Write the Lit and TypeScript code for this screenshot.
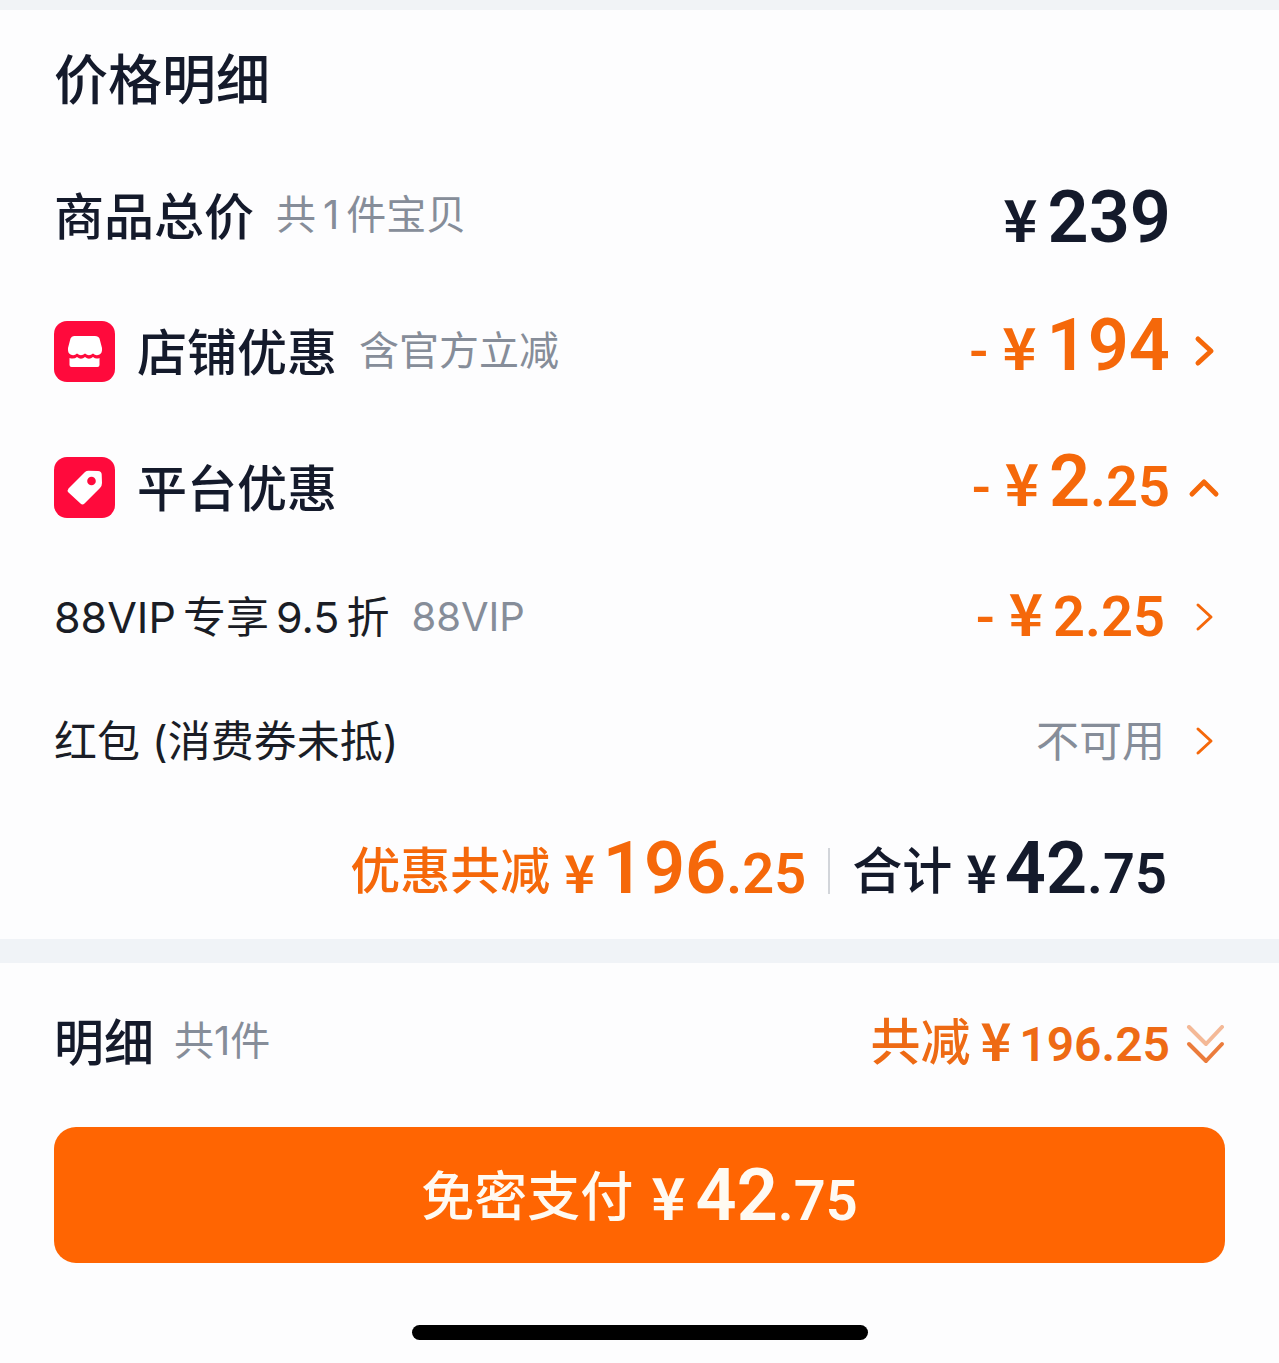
import { LitElement, html, css, svg, nothing } from "lit";
import { customElement, property } from "lit/decorators.js";

@customElement("price-amount")
class PriceAmount extends LitElement {
  @property() whole = "";
  @property() fraction = "";
  @property({ type: Boolean }) minus = false;

  static styles = css`
    :host {
      display: inline-flex;
      align-items: baseline;
      font-family: Roboto, "Noto Sans CJK SC", sans-serif;
      font-weight: 600;
      line-height: 72px;
      white-space: nowrap;
    }
    .minus {
      font-size: 56px;
      font-weight: 500;
      margin-right: 14px;
    }
    .yen {
      font-family: "Noto Sans CJK SC", sans-serif;
      font-weight: 700;
      font-size: 58px;
      margin-right: 10px;
    }
    .whole {
      font-size: 72px;
    }
    .fraction {
      font-size: 56px;
    }
    :host([even]) .whole {
      font-size: 56px;
    }
    :host([summary]) .yen,
    :host([small]) .yen {
      font-size: 52px;
      margin-right: 8px;
    }
    :host([small]) .whole,
    :host([small]) .fraction {
      font-size: 48px;
    }
  `;

  render() {
    return html`${this.minus ? html`<span class="minus">-</span>` : nothing}<span class="yen">¥</span
      ><span class="whole">${this.whole}</span
      >${this.fraction ? html`<span class="fraction">.${this.fraction}</span>` : nothing}`;
  }
}

const chevronRight = (width: number) => svg`
  <path d="M13 8 L26 20 L13 32" fill="none" stroke="currentColor" stroke-width=${width}
    stroke-linecap="round" stroke-linejoin="round" />`;

@customElement("app-root")
class AppRoot extends LitElement {
  static styles = css`
    :host {
      display: block;
      min-height: 100vh;
      background: #fdfdfe;
      color: #141a2b;
      font-family: Inter, "Noto Sans CJK SC", sans-serif;
    }
    .strip {
      height: 10px;
      background: #f1f3f6;
    }
    .divider {
      height: 24px;
      background: #f0f3f7;
    }
    .section {
      padding: 0 54px;
    }
    .row {
      display: flex;
      align-items: center;
      justify-content: space-between;
      height: 136px;
    }
    .heading {
      height: 137px;
    }
    .sub {
      height: 124px;
    }
    .label {
      display: flex;
      align-items: center;
      gap: 22px;
      white-space: nowrap;
    }
    .title,
    .name {
      margin: 0;
      font-weight: 500;
      line-height: 72px;
    }
    .title {
      padding-top: 4px;
      font-size: 54px;
    }
    .name {
      font-size: 50px;
    }
    .row h2.name {
      padding-top: 4px;
    }
    .plain {
      font-size: 43px;
      line-height: 64px;
      color: #1a1d26;
    }
    .hint {
      font-size: 40px;
      line-height: 64px;
      color: #868d99;
    }
    .latin {
      margin: 0 7px;
    }
    .plain .latin:first-child {
      margin-left: 0;
    }
    .badge {
      width: 61px;
      height: 61px;
      display: block;
    }
    .value {
      display: flex;
      align-items: center;
      gap: 15px;
      padding: 0;
      border: 0;
      background: none;
      font: inherit;
      color: #f5680a;
      cursor: pointer;
    }
    .sub .value {
      gap: 20px;
    }
    .row .value price-amount {
      padding-bottom: 6px;
    }
    .row .total {
      padding: 4px 54px 0 0;
    }
    .unavailable {
      font-size: 43px;
      line-height: 64px;
      color: #868d99;
    }
    .chevron {
      width: 40px;
      height: 40px;
      display: block;
    }
    .summary {
      display: flex;
      align-items: center;
      justify-content: flex-end;
      gap: 22px;
      height: 136px;
      padding-right: 58px;
      white-space: nowrap;
    }
    .sum,
    .brief,
    .paytext {
      display: flex;
      align-items: center;
    }
    .sum {
      gap: 14px;
    }
    .orange {
      color: #f5680a;
    }
    .rule {
      width: 2px;
      height: 46px;
      background: #d2d5da;
    }
    .detail {
      height: 164px;
    }
    .detail .label {
      gap: 20px;
      padding-bottom: 8px;
    }
    .brief {
      gap: 10px;
      padding-bottom: 6px;
      color: #ee6a14;
    }
    .row .brief price-amount {
      padding: 0;
    }
    .pay {
      display: flex;
      align-items: center;
      justify-content: center;
      width: 100%;
      height: 136px;
      padding: 4px 0 0;
      border: 0;
      border-radius: 22px;
      background: #ff6502;
      color: #fffaf2;
      font: inherit;
      font-size: 53px;
      line-height: 72px;
      font-weight: 500;
      cursor: pointer;
    }
    .paytext {
      gap: 18px;
    }
    .paytext price-amount {
      padding-top: 2px;
    }
    .home {
      width: 456px;
      max-width: 60%;
      height: 15px;
      margin: 62px auto 0;
      border-radius: 8px;
      background: #000;
    }
  `;

  render() {
    return html`
      <div class="strip"></div>
      <section class="section">
        <div class="row heading"><h1 class="title">价格明细</h1></div>
        <div class="row">
          <div class="label">
            <h2 class="name">商品总价</h2>
            <span class="hint">共<span class="latin">1</span>件宝贝</span>
          </div>
          <price-amount class="total" whole="239"></price-amount>
        </div>
        <div class="row">
          <div class="label">
            <svg class="badge" viewBox="0 0 61 61" aria-hidden="true">
              <rect width="61" height="61" rx="13" fill="#ff0a3c" />
              <path d="M20 15 H41 Q44.500 15 45.500 17.500 L48 27 Q48.500 32 45.500 33.500 Q42 35.500 39 32.500 Q35 36 31 32.500 Q27 36 23 32.500 Q20 35.500 16.500 33.500 Q13.500 32 14 27 L16.500 17.500 Q17.500 15 20 15 Z" fill="#fff" />
              <path d="M15.500 37 Q20 38.500 23 36 Q27 39.500 31 36 Q35 39.500 39 36 Q42 38.500 45.500 37 V44 Q45.500 46 43.500 46 H17.500 Q15.500 46 15.500 44 Z" fill="#fff" />
            </svg>
            <h2 class="name">店铺优惠</h2>
            <span class="hint">含官方立减</span>
          </div>
          <button class="value" aria-label="店铺优惠 -¥194">
            <price-amount minus whole="194"></price-amount>
            <svg class="chevron" viewBox="0 0 40 40" aria-hidden="true">${chevronRight(5)}</svg>
          </button>
        </div>
        <div class="row">
          <div class="label">
            <svg class="badge" viewBox="0 0 61 61" aria-hidden="true">
              <rect width="61" height="61" rx="13" fill="#ff0a3c" />
              <path d="M31 15 Q32.500 13.800 34.500 13.800 L44 14 Q47.500 14.200 47.700 17.500 L48 26 Q48 29 46 31 L30.500 46.500 Q28.500 48.500 26.500 46.500 L14.500 35.500 Q12.800 33.500 14.500 31.500 Z" fill="#fff" />
              <circle cx="37.500" cy="24" r="4.300" fill="#ff0a3c" />
            </svg>
            <h2 class="name">平台优惠</h2>
          </div>
          <button class="value" aria-label="平台优惠 -¥2.25" aria-expanded="true">
            <price-amount minus whole="2" fraction="25"></price-amount>
            <svg class="chevron" viewBox="0 0 40 40" aria-hidden="true">
              <path d="M7 27 L19 15 L31 27" fill="none" stroke="currentColor" stroke-width="5" stroke-linecap="round" stroke-linejoin="round" />
            </svg>
          </button>
        </div>
        <div class="row sub">
          <div class="label">
            <span class="plain"><span class="latin">88VIP</span>专享<span class="latin">9.5</span>折</span>
            <span class="hint">88VIP</span>
          </div>
          <button class="value" aria-label="88VIP -¥2.25">
            <price-amount minus even whole="2" fraction="25"></price-amount>
            <svg class="chevron" viewBox="0 0 40 40" aria-hidden="true">${chevronRight(3)}</svg>
          </button>
        </div>
        <div class="row sub">
          <span class="plain">红包 (消费券未抵)</span>
          <button class="value">
            <span class="unavailable">不可用</span>
            <svg class="chevron" viewBox="0 0 40 40" aria-hidden="true">${chevronRight(3)}</svg>
          </button>
        </div>
        <div class="summary">
          <div class="sum orange">
            <span class="name">优惠共减</span>
            <price-amount summary whole="196" fraction="25"></price-amount>
          </div>
          <span class="rule"></span>
          <div class="sum">
            <span class="name">合计</span>
            <price-amount summary whole="42" fraction="75"></price-amount>
          </div>
        </div>
      </section>
      <div class="divider"></div>
      <section class="section">
        <div class="row detail">
          <div class="label">
            <h2 class="name">明细</h2>
            <span class="hint">共1件</span>
          </div>
          <button class="value" aria-label="共减 ¥196.25">
            <span class="brief">
              <span class="name">共减</span>
              <price-amount small whole="196" fraction="25"></price-amount>
            </span>
            <svg class="chevron" viewBox="0 0 40 40" aria-hidden="true">
              <g fill="none" stroke="#e8651a" stroke-width="4" stroke-linecap="round" stroke-linejoin="round">
                <path d="M4 2 L21 19 L37 2" opacity=".45" />
                <path d="M4 19 L21 36 L37 19" opacity=".85" />
              </g>
            </svg>
          </button>
        </div>
        <button class="pay">
          <span class="paytext">
            <span>免密支付</span>
            <price-amount whole="42" fraction="75"></price-amount>
          </span>
        </button>
      </section>
      <div class="home"></div>
    `;
  }
}
